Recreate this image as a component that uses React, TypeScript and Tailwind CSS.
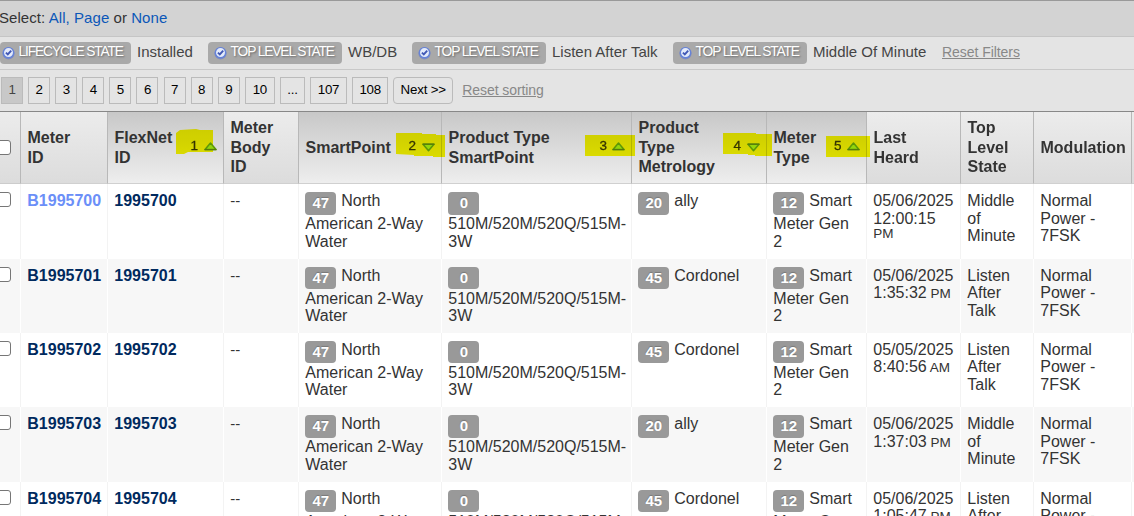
import React from "react";

type Sort = {
  order: number;
  up: boolean;
  box: string;
  num: string;
  arrow: string;
  width: number;
  height: number;
  blob: string;
};

type Column = { lines: string[]; sort?: Sort };

const columns: Column[] = [
  { lines: ["Meter", "ID"] },
  {
    lines: ["FlexNet", "ID"],
    sort: {
      order: 1, up: true, box: "left-[68px] top-[17px]", num: "left-[14.5px] top-[8px]", arrow: "left-[27.5px] top-[13px]",
      width: 37, height: 25, blob: "M0 4 L4 1 L20 0 L24 1 H37 V23 H12 L8 25 H0 Z",
    },
  },
  { lines: ["Meter", "Body", "ID"] },
  {
    lines: ["SmartPoint"],
    sort: {
      order: 2, up: false, box: "left-[97px] top-[21px]", num: "left-[12.5px] top-[4px]", arrow: "left-[25.5px] top-[10px]",
      width: 49, height: 24, blob: "M0 0 H26 V1 H40 V2 H49 V24 H37 V23 H18 V22 L0 21 Z",
    },
  },
  {
    lines: ["Product Type", "SmartPoint"],
    sort: {
      order: 3, up: true, box: "left-[143px] top-[23px]", num: "left-[14.5px] top-[2px]", arrow: "left-[27px] top-[7px]",
      width: 50, height: 21, blob: "M0 0 H50 V21 H0 Z",
    },
  },
  {
    lines: ["Product", "Type", "Metrology"],
    sort: {
      order: 4, up: false, box: "left-[91px] top-[21px]", num: "left-[10.5px] top-[4px]", arrow: "left-[23.5px] top-[10px]",
      width: 49, height: 23, blob: "M0 0 H33 V1 H49 V23 H32 V22 H25 V21 H0 Z",
    },
  },
  {
    lines: ["Meter", "Type"],
    sort: {
      order: 5, up: true, box: "left-[59px] top-[24px]", num: "left-[8px] top-[1px]", arrow: "left-[21px] top-[6px]",
      width: 44, height: 21, blob: "M0 0 H44 V21 H0 Z",
    },
  },
  { lines: ["Last", "Heard"] },
  { lines: ["Top", "Level", "State"] },
  { lines: ["Modulation"] },
  { lines: [] },
];

const middle = ["Middle", "of", "Minute"];
const listen = ["Listen", "After", "Talk"];

const rows = [
  { id: "1995700", code: "20", metrology: "ally", date: "05/06/2025", time: "12:00:15", ampm: "PM", wrap: true, state: middle },
  { id: "1995701", code: "45", metrology: "Cordonel", date: "05/06/2025", time: "1:35:32", ampm: "PM", wrap: false, state: listen },
  { id: "1995702", code: "45", metrology: "Cordonel", date: "05/05/2025", time: "8:40:56", ampm: "AM", wrap: false, state: listen },
  { id: "1995703", code: "20", metrology: "ally", date: "05/06/2025", time: "1:37:03", ampm: "PM", wrap: false, state: middle },
  { id: "1995704", code: "45", metrology: "Cordonel", date: "05/06/2025", time: "1:05:47", ampm: "PM", wrap: false, state: listen },
];

const pages = ["1", "2", "3", "4", "5", "6", "7", "8", "9", "10", "...", "107", "108"];
const pageWidths = ["w-[22px]", "w-[22px]", "w-[22px]", "w-[22px]", "w-[22px]", "w-[22px]", "w-[22px]", "w-[22px]", "w-[22px]", "w-[30px]", "w-[25px]", "w-[37px]", "w-[36px]"];

const grid =
  "grid w-[1134px] grid-cols-[20px_87px_116px_75px_143px_190px_135px_100px_94px_73px_98px_3px]";

function Arrow({ up }: { up: boolean }) {
  return (
    <svg width="13" height="9" viewBox="0 0 13 9" className="block overflow-visible">
      <path
        d={up ? "M6.5 1 L12 7.5 H1 Z" : "M1 1.3 H12 L6.5 7.8 Z"}
        fill="#93d60c"
        stroke="#5c9708"
        strokeWidth="1.5"
        strokeLinejoin="round"
      />
      <path d={up ? "M1 7.7 H12" : "M1 1.2 H12"} stroke="#547b0b" strokeWidth="1.3" strokeLinecap="round" />
    </svg>
  );
}

function SortMark({ sort }: { sort: Sort }) {
  return (
    <>
      <svg
        width={sort.width}
        height={sort.height}
        className={`absolute z-10 mix-blend-multiply ${sort.box}`}
      >
        <path d={sort.blob} fill="#fafa00" />
      </svg>
      <div className={`absolute z-20 font-normal ${sort.box}`}>
        <span className={`absolute text-[13.5px] leading-[18px] text-[#343400] [-webkit-text-stroke:0.3px_#343400] ${sort.num}`}>{sort.order}</span>
        <span className={`absolute ${sort.arrow}`}>
          <Arrow up={sort.up} />
        </span>
      </div>
    </>
  );
}

function Check() {
  return (
    <svg width="13" height="14" viewBox="0 0 13 14" className="shrink-0">
      <circle cx="6.5" cy="7.4" r="6.1" fill="#8a90b4" />
      <circle cx="6.5" cy="6.8" r="5.9" fill="#6683d8" />
      <circle cx="6.5" cy="6.6" r="4.5" fill="#e3eafa" />
      <path d="M3.9 6.6 L5.8 8.4 L9.2 4.7" fill="none" stroke="#4057b5" strokeWidth="1.9" />
    </svg>
  );
}

function Pill({ label, className }: { label: string; className: string }) {
  return (
    <span className={`flex h-[22px] shrink-0 items-center rounded-[4px] bg-[#a9a9a9] ${className}`}>
      <Check />
      <span className="ml-[4px] pb-[3px] text-[13.8px] leading-[18px] tracking-[-1.13px] text-white [text-shadow:1px_1px_2px_#666]">
        {label}
      </span>
    </span>
  );
}

function Box({ className }: { className: string }) {
  return <span className={`block h-[15px] w-[15px] rounded-[3px] border border-[#767676] bg-white ${className}`} />;
}

function Coded({ code, lines }: { code: string; lines: string[] }) {
  return (
    <>
      <div className="flex h-[23px] items-start">
        <span className="flex h-[22.5px] w-[31px] items-center justify-center rounded-[4px] bg-[#999] pb-px text-[15px] font-bold text-white [text-shadow:0_-1px_1px_#777]">
          {code}
        </span>
        <span className="ml-[5px]">{lines[0]}</span>
      </div>
      {lines.slice(1).map((line) => (
        <div key={line} className="leading-[17.2px]">{line}</div>
      ))}
    </>
  );
}

export default function App() {
  return (
    <div className="h-[516px] w-[1134px] overflow-hidden bg-white font-['Liberation_Sans',Arial,sans-serif] text-[#333]">
      <div className="h-[37px] border-t border-b border-t-[#999] border-b-[#c5c5c5] bg-[#d3d3d3] text-[15px] leading-[34px] tracking-[0.06px] whitespace-pre">
        <span className="-ml-px">Select: </span>
        <a className="text-[#0b57b8]">All</a>
        <span className="text-[#0b57b8]">, </span>
        <a className="text-[#0b57b8]">Page</a> or <a className="text-[#0b57b8]">None</a>
      </div>

      <div className="flex h-[33px] items-start border-b border-[#c8c8c8] bg-[#e4e4e4] pt-[5px] text-[15px] leading-[20px] whitespace-nowrap text-[#444]">
        <Pill label="LIFECYCLE STATE" className="w-[131px] pl-[1.5px]" />
        <span className="ml-[6px] w-[71px] shrink-0">Installed</span>
        <Pill label="TOP LEVEL STATE" className="w-[134px] pl-[5.5px]" />
        <span className="ml-[6px] w-[64px] shrink-0">WB/DB</span>
        <Pill label="TOP LEVEL STATE" className="w-[134px] pl-[5.5px]" />
        <span className="ml-[6px] w-[121px] shrink-0">Listen After Talk</span>
        <Pill label="TOP LEVEL STATE" className="w-[134px] pl-[5.5px]" />
        <span className="ml-[6px] w-[129px] shrink-0">Middle Of Minute</span>
        <a className="text-[14px] tracking-[-0.05px] text-[#888] underline">Reset Filters</a>
      </div>

      <div className="flex h-[41px] items-start gap-[5.1px] bg-[#e4e4e4] pt-[7px] pl-px text-[13.33px] leading-[24px] text-black">
        {pages.map((page, i) => (
          <span
            key={page}
            className={`h-[27px] shrink-0 border border-[#bbb] text-center tracking-[-0.3px] ${pageWidths[i]} ${i === 0 ? "bg-[#c8c8c8] text-[#444]" : ""}`}
          >
            {page}
          </span>
        ))}
        <span className="h-[27px] w-[60px] shrink-0 rounded-[4px] border border-[#bbb] text-center tracking-[-0.2px]">Next &gt;&gt;</span>
        <a className="ml-[4px] pt-px text-[14px] tracking-[-0.08px] text-[#888] underline">Reset sorting</a>
      </div>

      <div className={`${grid} isolate h-[73px] border-t border-[#888] text-[16px] leading-[19.5px] font-bold`}>
        <div className="overflow-hidden border-b border-[#ccc] bg-linear-to-b from-[#ececec] to-[#dcdcdc] pt-[28px]">
          <Box className="-ml-[4px]" />
        </div>
        {columns.map((column, i) => (
          <div
            key={i}
            className={`relative flex flex-col justify-center border-b border-l border-b-[#d0d0d0] border-l-[#b8b8b8] pl-[6.5px] ${
              column.sort ? "bg-linear-to-b from-[#c8c8c8] to-[#eee]" : "bg-linear-to-b from-[#ececec] to-[#dcdcdc]"
            }`}
          >
            {column.lines.map((line) => (
              <div key={line} className="whitespace-nowrap">
                {line}
              </div>
            ))}
            {column.sort && <SortMark sort={column.sort} />}
          </div>
        ))}
      </div>

      <div className="pt-[0.3px]">
        {rows.map((row, i) => (
          <div
            key={row.id}
            className={`${grid} h-[74.35px] text-[16px] leading-[17.5px] [&>div]:pt-[8px] [&>div]:whitespace-nowrap [&>div+div]:border-l [&>div+div]:pl-[6.3px] ${
              i % 2 ? "bg-[#f7f7f7] [&>div+div]:border-white" : "bg-white [&>div+div]:border-[#f3f3f3]"
            }`}
          >
            <div className="overflow-hidden">
              <Box className="-ml-[4px]" />
            </div>
            <div className={`font-bold ${i === 0 ? "text-[#6b8ff8]" : "text-[#002a5e]"}`}>B{row.id}</div>
            <div className="font-bold text-[#002a5e]">{row.id}</div>
            <div className="text-[15px]">--</div>
            <div>
              <Coded code="47" lines={["North", "American 2-Way", "Water"]} />
            </div>
            <div>
              <Coded code="0" lines={["", "510M/520M/520Q/515M-", "3W"]} />
            </div>
            <div>
              <Coded code={row.code} lines={[row.metrology]} />
            </div>
            <div>
              <Coded code="12" lines={["Smart", "Meter Gen", "2"]} />
            </div>
            <div>
              <div>{row.date}</div>
              <div>
                {row.time}
                {!row.wrap && <span className="text-[13.5px]"> {row.ampm}</span>}
              </div>
              {row.wrap && <div className="text-[13.5px] leading-[14px]">{row.ampm}</div>}
            </div>
            <div>
              {row.state.map((line) => (
                <div key={line}>{line}</div>
              ))}
            </div>
            <div>
              <div>Normal</div>
              <div>Power -</div>
              <div>7FSK</div>
            </div>
            <div />
          </div>
        ))}
      </div>
    </div>
  );
}
